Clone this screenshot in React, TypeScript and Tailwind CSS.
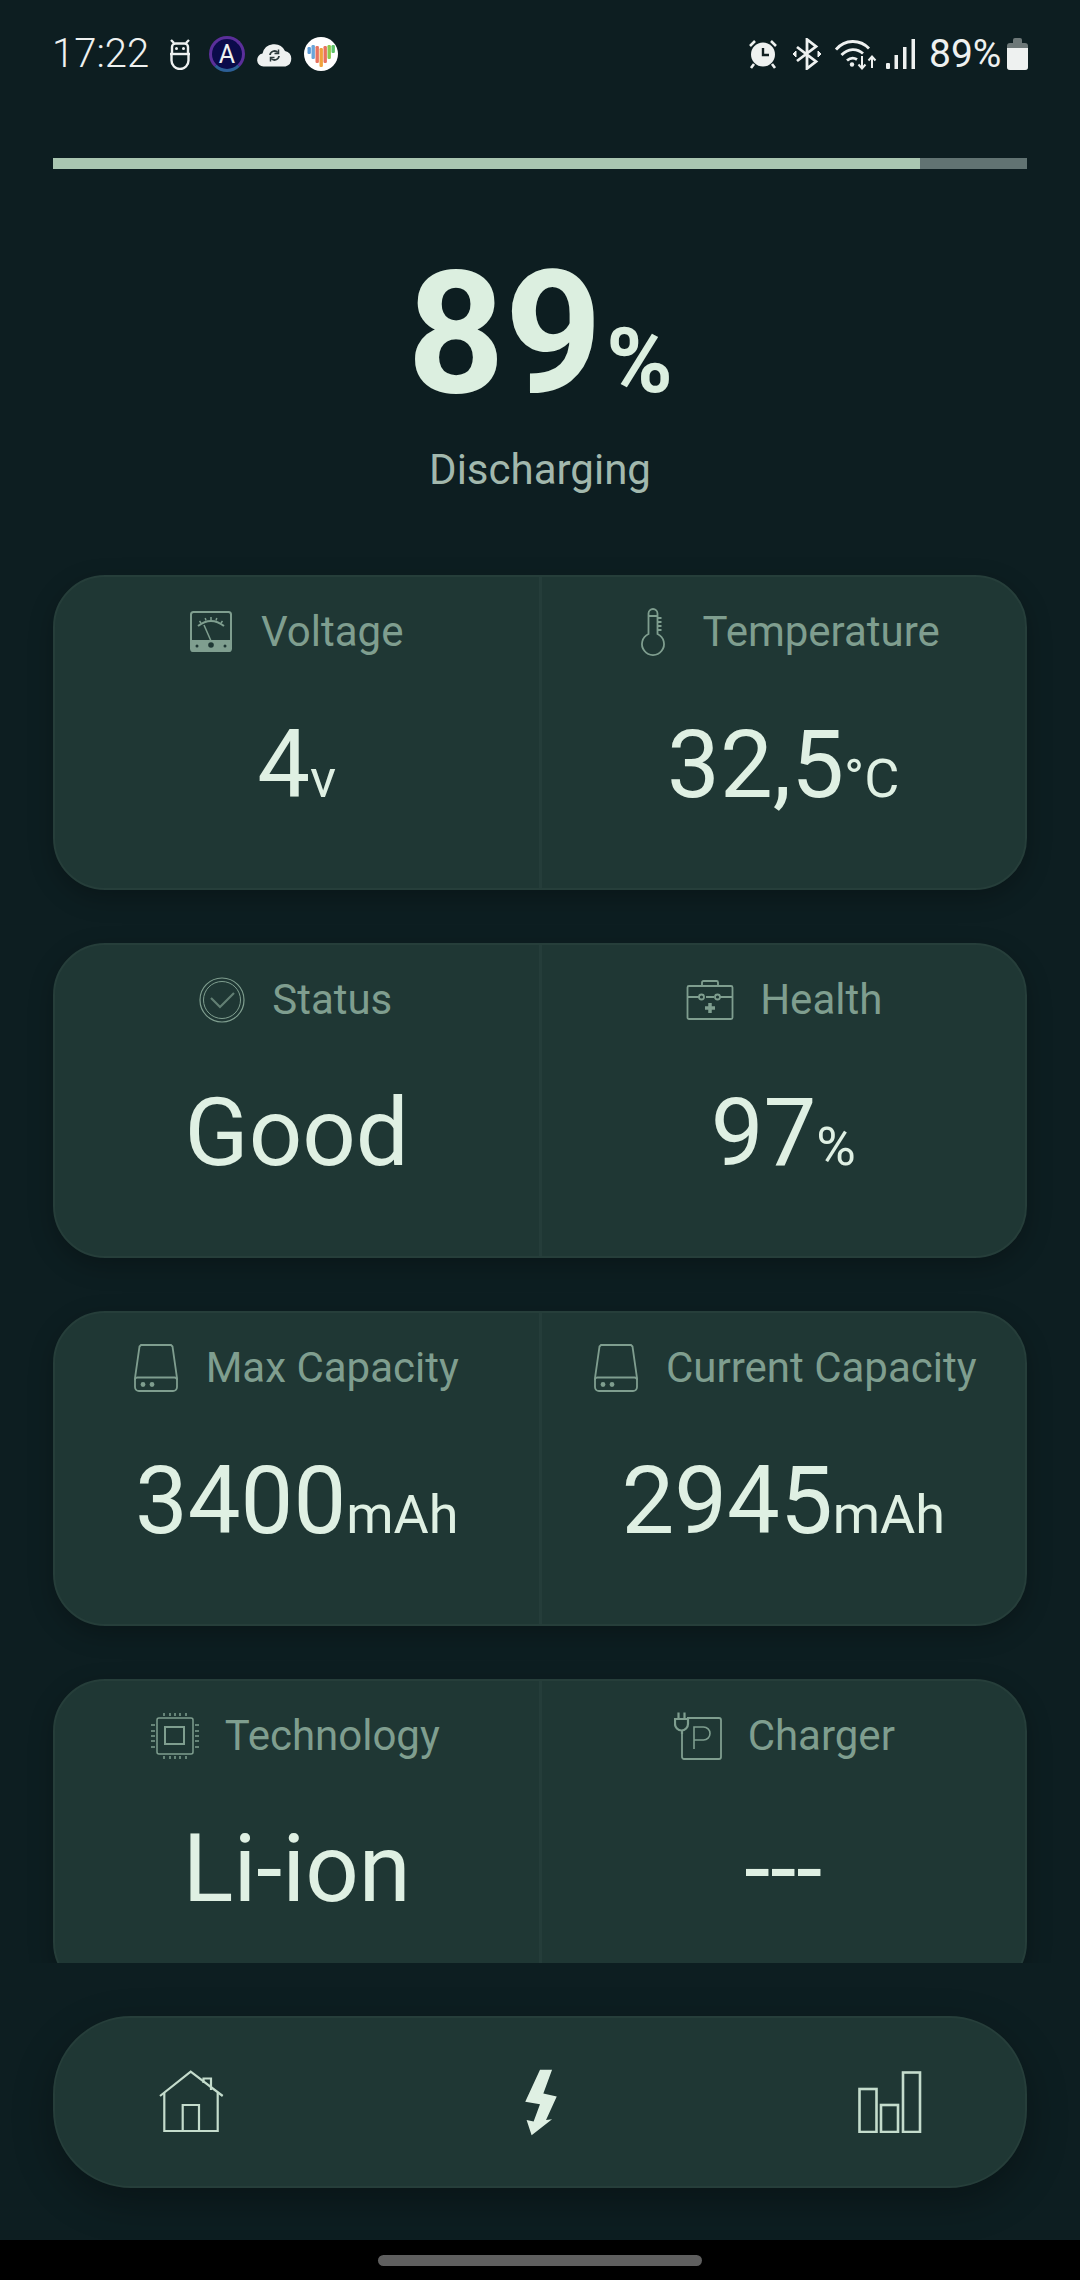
import React from 'react';

const muted = '#7f9e8f';

function VoltageIcon() {
  return (
    <svg width="48" height="48" viewBox="0 0 48 48" fill="none" stroke={muted} strokeWidth="2">
      <rect x="4" y="4" width="40" height="39" rx="2.5" />
      <path d="M4 32h40v10a2 2 0 0 1-2 2H6a2 2 0 0 1-2-2z" fill={muted} stroke="none" />
      <path d="M11 18Q24 8 37 18" />
      <path d="M14 15l-1.500-2M19 12.500l-.8-2.500M24 12v-3M29 12.500l.8-2.500M34 15l1.500-2" strokeWidth="1.500" />
      <path d="M17 17L24 33" strokeWidth="1.500" />
      <circle cx="24" cy="37" r="2.800" fill="#1f3734" stroke="none" />
      <circle cx="10" cy="38" r="1.500" fill="#1f3734" stroke="none" />
      <circle cx="38" cy="38" r="1.500" fill="#1f3734" stroke="none" />
    </svg>
  );
}

function ThermometerIcon() {
  return (
    <svg width="48" height="48" viewBox="0 0 48 48" fill="none" stroke={muted} strokeWidth="1.800">
      <path d="M19.500 26V5.500a4.500 4.500 0 0 1 9 0V26a11 11 0 1 1-9 0z" />
      <path d="M19.500 8h9M28.500 10h4M28.500 14h4M28.500 18h4M28.500 22h4" />
    </svg>
  );
}

function StatusIcon() {
  return (
    <svg width="48" height="48" viewBox="0 0 48 48" fill="none" stroke={muted}>
      <circle cx="24" cy="24" r="22" strokeWidth="1.200" />
      <circle cx="24" cy="24" r="18.500" strokeWidth="1" />
      <path d="M13 22l9 9 14-14" strokeWidth="2.200" strokeOpacity="0.700" />
    </svg>
  );
}

function HealthIcon() {
  return (
    <svg width="48" height="48" viewBox="0 0 48 48" fill="none" stroke={muted} strokeWidth="1.800">
      <rect x="1.500" y="10" width="45" height="33" rx="1.500" />
      <path d="M16 10V6.500a1.500 1.500 0 0 1 1.500-1.500h13a1.500 1.500 0 0 1 1.500 1.500V10" />
      <path d="M1.500 21h12M20 21h8M34 21h12.500" />
      <circle cx="15.500" cy="21" r="2.500" />
      <circle cx="31.500" cy="21" r="2.500" />
      <path d="M24 27v10M19 32h10" strokeWidth="3.500" />
    </svg>
  );
}

function DriveIcon() {
  return (
    <svg width="48" height="48" viewBox="0 0 48 48" fill="none" stroke={muted} strokeWidth="1.800">
      <path d="M9 1h30l1.500 1.500L45 34v9a4 4 0 0 1-4 4H7a4 4 0 0 1-4-4v-9L7.500 2.500z" />
      <path d="M3 36a2.500 2.500 0 0 1 2.500-2.500h37A2.500 2.500 0 0 1 45 36" />
      <circle cx="11" cy="40.500" r="2.400" fill={muted} stroke="none" />
      <circle cx="20" cy="40.500" r="2.400" fill={muted} stroke="none" />
    </svg>
  );
}

function ChipIcon() {
  return (
    <svg width="48" height="48" viewBox="0 0 48 48" fill="none" stroke={muted} strokeWidth="1.500">
      <rect x="6" y="6" width="36" height="36" rx="2" />
      <rect x="14" y="15" width="19" height="17" strokeWidth="2" />
      <path d="M13 1v3M19 1v3M24 1v3M29 1v3M35 1v3M13 44v3M19 44v3M24 44v3M29 44v3M35 44v3M0 13h4M0 19h4M0 24h4M0 29h4M0 35h4M44 13h4M44 19h4M44 24h4M44 29h4M44 35h4" />
    </svg>
  );
}

function ChargerIcon() {
  return (
    <svg width="48" height="48" viewBox="0 0 48 48" fill="none" stroke={muted} strokeWidth="1.800">
      <path d="M13 6h32a2 2 0 0 1 2 2v37a2 2 0 0 1-2 2H10a2 2 0 0 1-2-2V22" />
      <path d="M1 7h13v5a6.500 6.500 0 0 1-13 0zM4.500 7V0.500M10.500 7V0.500M8 18.500V22" strokeWidth="2.200" />
      <path d="M20 37V15h9.500a6 6 0 0 1 0 13H20" strokeWidth="1.600" />
    </svg>
  );
}

function RobotIcon() {
  return (
    <svg width="22" height="32" viewBox="0 0 22 32" fill="none" stroke="#eef1f0" strokeWidth="2.400">
      <path d="M2 2l3 3M20 2l-3 3" />
      <path d="M3 15V9a3.500 3.500 0 0 1 3.500-3.500h9A3.500 3.500 0 0 1 19 9v6" />
      <path d="M1 16h20" />
      <path d="M2.500 16v6.500a8.500 8.500 0 0 0 17 0V16" />
      <circle cx="7.500" cy="10.500" r="1.500" fill="#eef1f0" stroke="none" />
      <circle cx="14.500" cy="10.500" r="1.500" fill="#eef1f0" stroke="none" />
    </svg>
  );
}

function ArchIcon() {
  return (
    <div className="flex h-[36px] w-[36px] items-center justify-center rounded-full border-[3px] border-[#5b2f9a] border-b-[#2c5f96] bg-[#0b0b4a]">
      <span className="text-[25px] leading-none text-[#eef1f0] font-['Roboto',sans-serif]">A</span>
    </div>
  );
}

function CloudIcon() {
  return (
    <svg width="37" height="25" viewBox="0 0 36 25">
      <path d="M7 24.500a6.500 6.500 0 0 1-1-12.900A12 12 0 0 1 28.500 9 8 8 0 0 1 29 24.500z" fill="#eef1f0" />
      <path d="M13.500 13a4.500 4.500 0 0 1 7.800-2.500M22.500 14a4.500 4.500 0 0 1-7.800 2.500" fill="none" stroke="#2c3a3c" strokeWidth="1.800" />
      <path d="M22 7.500v4h-4M14 19.500v-4h4" fill="none" stroke="#2c3a3c" strokeWidth="1.500" />
    </svg>
  );
}

function HeartIcon() {
  const bars = [
    ['#5b9bd8', 3.5, 10, 7],
    ['#6aa5d8', 7.5, 8, 14],
    ['#e8725e', 11.5, 9, 17],
    ['#f0a23c', 15.5, 11, 19],
    ['#e8725e', 19.5, 9, 17],
    ['#8cc84b', 23.5, 8, 14],
    ['#5cc46a', 27.5, 8, 8],
  ] as const;
  return (
    <svg width="34" height="34" viewBox="0 0 34 34">
      <circle cx="17" cy="17" r="17" fill="#ffffff" />
      {bars.map(([color, x, y, h], i) => (
        <rect key={i} x={x} y={y} width="3.400" height={h} rx="1.200" fill={color} />
      ))}
    </svg>
  );
}

function AlarmIcon() {
  return (
    <svg width="30" height="30" viewBox="0 0 30 30">
      <circle cx="15" cy="15.500" r="12" fill="#eef1f0" />
      <path d="M2 7l5-5M28 7l-5-5M6 25l-3 4M24 25l3 4" stroke="#eef1f0" strokeWidth="2.600" fill="none" />
      <path d="M15 9v7h6" stroke="#101e21" strokeWidth="2.400" fill="none" />
    </svg>
  );
}

function BluetoothIcon() {
  return (
    <svg width="30" height="32" viewBox="0 0 30 32" fill="none" stroke="#eef1f0" strokeWidth="2.800">
      <path d="M5 9l19 14.500L15 30.500V1.500l9 7L5 23" />
      <path d="M1 16l3-3v6zM29 16l-3-3v6z" fill="#eef1f0" strokeWidth="1" />
    </svg>
  );
}

function WifiIcon() {
  return (
    <svg width="42" height="31" viewBox="0 0 42 31" fill="none" stroke="#eef1f0" strokeWidth="2.800">
      <path d="M1 10.500C10 0 25 0 34 9.500" />
      <path d="M6.500 16C13 9 22 9 28 14.500" />
      <path d="M12 21.500c3.500-3 7-3 10-1" />
      <circle cx="17" cy="25.500" r="2.200" fill="#eef1f0" stroke="none" />
      <path d="M27 17v12M23.500 25.500l3.500 4 3.500-4M37 29V18M33.500 21.500l3.500-4 3.500 4" strokeWidth="2" />
    </svg>
  );
}

function SignalIcon() {
  return (
    <svg width="29" height="30" viewBox="0 0 29 30" fill="#eef1f0">
      <rect x="0" y="24" width="4" height="6" rx="1" />
      <rect x="8.500" y="16" width="3.500" height="14" />
      <rect x="17" y="8" width="3.500" height="22" />
      <rect x="25.500" y="0" width="3.500" height="30" />
    </svg>
  );
}

function BatteryIcon() {
  return (
    <svg width="21" height="32" viewBox="0 0 21 32">
      <path d="M6 5V2a2 2 0 0 1 2-2h5a2 2 0 0 1 2 2v3z" fill="#6d7878" />
      <path d="M3 5h15a3 3 0 0 1 3 3v21a3 3 0 0 1-3 3H3a3 3 0 0 1-3-3V8a3 3 0 0 1 3-3z" fill="#6d7878" />
      <path d="M0 10h21v19a3 3 0 0 1-3 3H3a3 3 0 0 1-3-3z" fill="#eef1f0" />
    </svg>
  );
}

function HomeIcon() {
  return (
    <svg width="66" height="64" viewBox="28 19 66 64" fill="none" stroke="#c4dccc" strokeWidth="2.200">
      <path d="M30 45L60.700 20.700L92.700 45" />
      <path d="M34.300 42V80H87.700V42" />
      <path d="M52.700 80V54H69V80" />
      <path d="M73.500 32V27.500H81V39" />
    </svg>
  );
}

function BoltIcon() {
  return (
    <svg width="34" height="67" viewBox="100 55 100 200">
      <path d="M147 57H183L157 128L197 137L165 207L183 205L122 253L107 207L128 212L147 160L103 153Z" fill="#dff0e3" />
    </svg>
  );
}

function BarsIcon() {
  return (
    <svg width="64" height="62" viewBox="0 0 64 62" fill="none" stroke="#c4dccc" strokeWidth="2.600">
      <rect x="1.500" y="18" width="17" height="43" />
      <rect x="23" y="34" width="17" height="27" />
      <rect x="45" y="1.500" width="17" height="59.500" />
    </svg>
  );
}

const rows = [
  [
    { icon: <VoltageIcon />, label: 'Voltage', value: '4', unit: 'v' },
    { icon: <ThermometerIcon />, label: 'Temperature', value: '32,5', unit: '°C' },
  ],
  [
    { icon: <StatusIcon />, label: 'Status', value: 'Good', unit: '' },
    { icon: <HealthIcon />, label: 'Health', value: '97', unit: '%' },
  ],
  [
    { icon: <DriveIcon />, label: 'Max Capacity', value: '3400', unit: 'mAh' },
    { icon: <DriveIcon />, label: 'Current Capacity', value: '2945', unit: 'mAh' },
  ],
  [
    { icon: <ChipIcon />, label: 'Technology', value: 'Li-ion', unit: '' },
    { icon: <ChargerIcon />, label: 'Charger', value: '---', unit: '' },
  ],
];

type Stat = (typeof rows)[number][number];

function StatCell({ stat, labelClass }: { stat: Stat; labelClass: string }) {
  return (
    <div className="flex flex-1 flex-col items-center pt-[31px]">
      <div className={`flex h-12 items-center gap-[26px] ${labelClass}`}>
        {stat.icon}
        <span className="text-[42px] leading-none text-[#7f9e8f]">{stat.label}</span>
      </div>
      <div className="mt-[54px] flex items-baseline text-[#dff0e3]">
        <span className="text-[94px] leading-[110px]">{stat.value}</span>
        {stat.unit && <span className="text-[54px] leading-none">{stat.unit}</span>}
      </div>
    </div>
  );
}

export default function App() {
  return (
    <div className="flex h-[2280px] w-[1080px] flex-col overflow-hidden bg-[#0d1e21] font-['Roboto',sans-serif]">
      {/* Status bar */}
      <div className="flex h-[108px] items-center justify-between px-[52px] text-[#eef1f0]">
        <div className="flex items-center">
          <span className="w-[117px] text-[40px] font-light leading-none">17:22</span>
          <RobotIcon />
          <div className="ml-[18px]"><ArchIcon /></div>
          <div className="ml-[11px]"><CloudIcon /></div>
          <div className="ml-[11px]"><HeartIcon /></div>
        </div>
        <div className="flex items-center">
          <AlarmIcon />
          <div className="ml-[14px]"><BluetoothIcon /></div>
          <div className="ml-[13px]"><WifiIcon /></div>
          <div className="ml-[9px]"><SignalIcon /></div>
          <span className="ml-[14px] w-[78px] text-[39px] leading-none">89%</span>
          <BatteryIcon />
        </div>
      </div>

      {/* Charge bar */}
      <div className="mx-[53px] mt-[50px] flex h-[11px] bg-[#617372]">
        <div className="h-full w-[867px] bg-[#a9c6b1]" />
      </div>

      {/* Level */}
      <div className="flex h-[371px] flex-col items-center pt-[79px]">
        <div className="flex items-baseline text-[#dcefe0]">
          <span className="text-[170px] font-bold leading-[172px]">89</span>
          <span className="ml-[4px] text-[90px] font-bold leading-none">%</span>
        </div>
        <span className="mt-[29px] text-[42px] leading-none text-[#a2b8ad]">Discharging</span>
      </div>

      {/* Scroll list, last card is cut off */}
      <div className="flex h-[1423px] flex-col gap-[53px] overflow-hidden px-[53px] pt-[35px]">
        {rows.map((row, i) => (
          <div
            key={i}
            className="flex h-[315px] shrink-0 rounded-[52px] border-2 border-[#263e3a] bg-[#1f3734] shadow-[0_8px_24px_rgba(0,0,0,0.25)]"
          >
            <StatCell stat={row[0]} labelClass="mr-[3px]" />
            <div className="w-[3px] bg-[#253d3a]" />
            <StatCell stat={row[1]} labelClass="ml-[2px]" />
          </div>
        ))}
      </div>

      {/* Bottom nav */}
      <div className="mx-[53px] mt-[53px] flex h-[172px] items-center justify-between rounded-[78px] border-2 border-[#263e3a] bg-[#1f3734] px-[103px] shadow-[0_14px_40px_rgba(0,0,0,0.3)]">
        <HomeIcon />
        <BoltIcon />
        <BarsIcon />
      </div>

      {/* Gesture bar */}
      <div className="mt-[52px] flex h-[40px] items-start justify-center bg-black pt-[15px]">
        <div className="h-[11px] w-[324px] rounded-full bg-[#5f5f5f]" />
      </div>
    </div>
  );
}
